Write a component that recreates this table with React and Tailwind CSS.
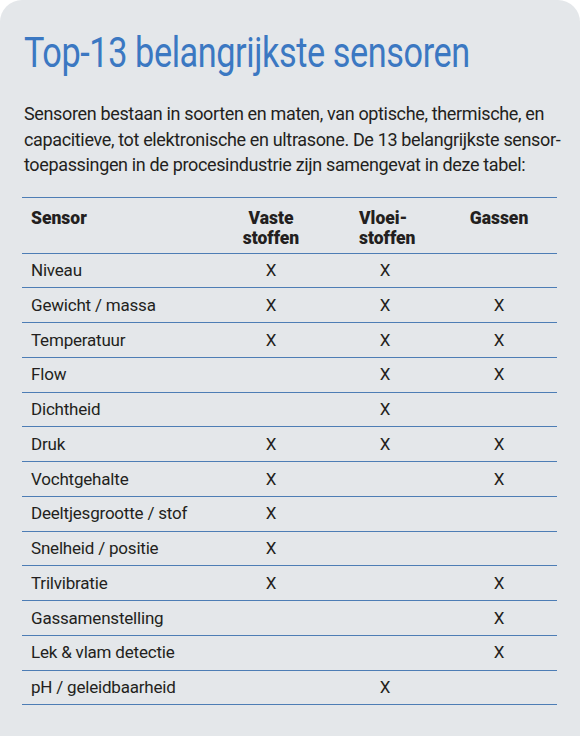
import React from "react";

const rows = [
  ["Niveau", true, true, false],
  ["Gewicht / massa", true, true, true],
  ["Temperatuur", true, true, true],
  ["Flow", false, true, true],
  ["Dichtheid", false, true, false],
  ["Druk", true, true, true],
  ["Vochtgehalte", true, false, true],
  ["Deeltjesgrootte / stof", true, false, false],
  ["Snelheid / positie", true, false, false],
  ["Trilvibratie", true, false, true],
  ["Gassamenstelling", false, false, true],
  ["Lek & vlam detectie", false, false, true],
  ["pH / geleidbaarheid", false, true, false],
];

export default function App() {
  return (
    <div className="w-[584px] h-[736px] bg-white overflow-hidden">
      <div className="w-[580px] h-[736px] bg-[#e4e7ea] rounded-t-[22px] pl-[24px] pr-[22px] pt-[29px] text-[#231f20] font-['Roboto',sans-serif]">
        <h1 className="text-[42px] leading-[48px] text-[#3b78c2] font-['Roboto',sans-serif] tracking-[-0.5px] origin-left scale-x-[0.815] whitespace-nowrap">
          Top-13 belangrijkste sensoren
        </h1>
        <p className="mt-[24px] text-[18px] leading-[25.5px] tracking-[-0.35px] whitespace-nowrap">
          Sensoren bestaan in soorten en maten, van optische, thermische, en
          <br />
          capacitieve, tot elektronische en ultrasone. De 13 belangrijkste sensor-
          <br />
          toepassingen in de procesindustrie zijn samengevat in deze tabel:
        </p>
        <div className="mt-[19px] w-[535px] -ml-[2px] border-t border-[#4d7db5]">
          <div className="flex h-[56px] border-b border-[#4d7db5] pt-[10px] text-[17.5px] leading-[20px] font-black">
            <div className="w-[192px] pl-[9px]">Sensor</div>
            <div className="w-[114px] text-center">Vaste<br />stoffen</div>
            <div className="w-[114px] pl-[31px]">Vloei-<br />stoffen</div>
            <div className="w-[114px] text-center">Gassen</div>
          </div>
          {rows.map(([name, a, b, c]) => (
            <div key={name} className="flex items-center h-[34.75px] border-b border-[#4d7db5] text-[17px] tracking-[-0.2px] pt-[1px]">
              <div className="w-[192px] pl-[9px]">{name}</div>
              <div className="w-[114px] text-center">{a ? "X" : ""}</div>
              <div className="w-[114px] text-center">{b ? "X" : ""}</div>
              <div className="w-[114px] text-center">{c ? "X" : ""}</div>
            </div>
          ))}
        </div>
      </div>
    </div>
  );
}
